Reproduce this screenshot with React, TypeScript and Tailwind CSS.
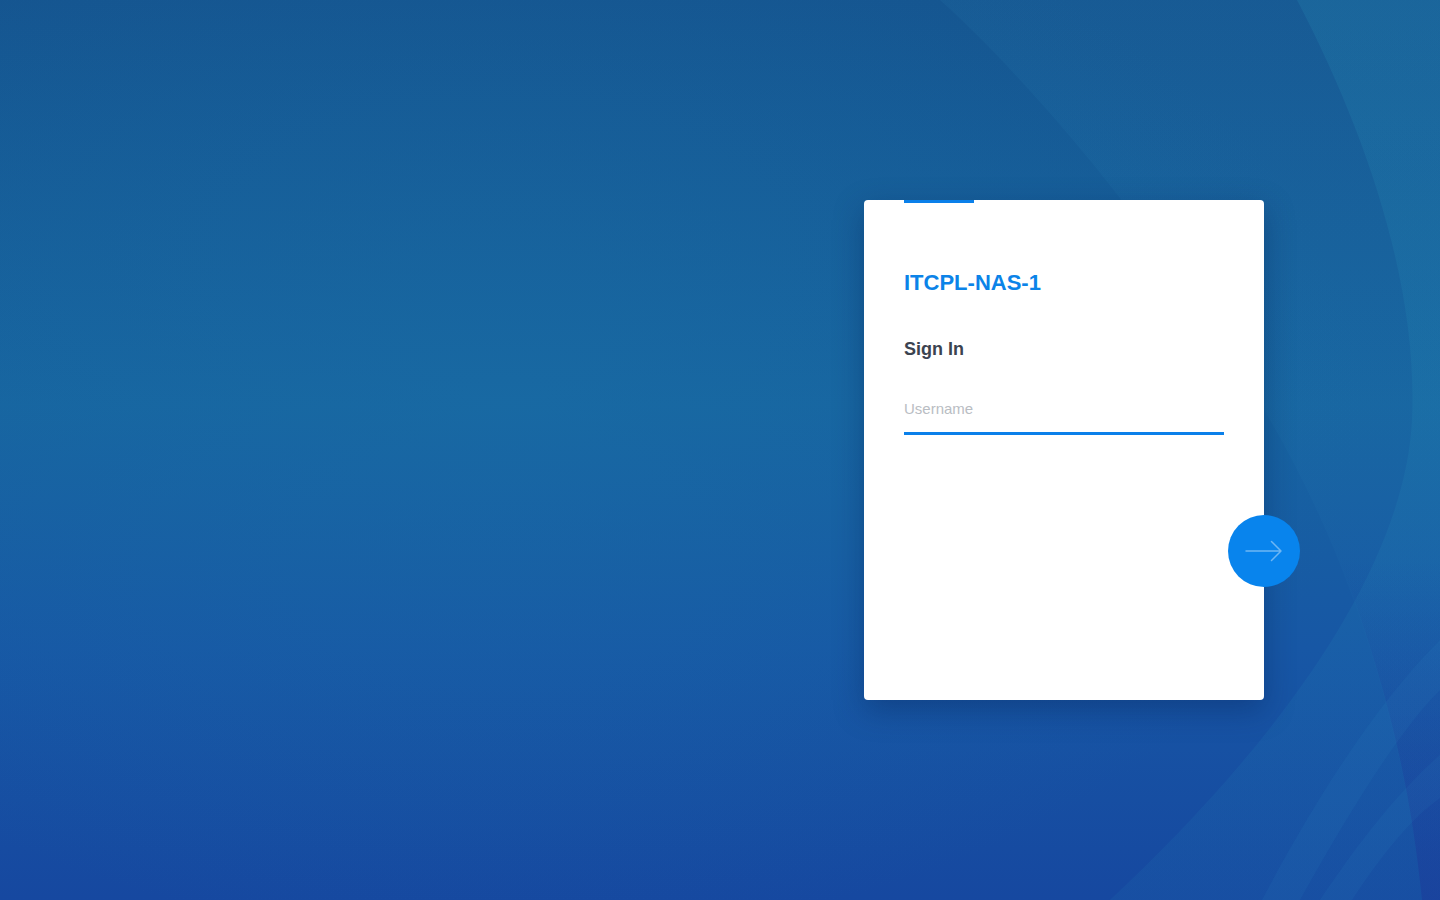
import { useState } from 'react'

function Backdrop() {
  return (
    <svg
      className="absolute inset-0 h-full w-full"
      viewBox="0 0 1440 900"
      preserveAspectRatio="none"
    >
      <defs>
        <radialGradient id="glow" cx="0.35" cy="0.45" r="0.6">
          <stop offset="0" stopColor="#1a72a8" stopOpacity="0.35" />
          <stop offset="1" stopColor="#1a72a8" stopOpacity="0" />
        </radialGradient>
        <linearGradient id="teal" x1="0" y1="0" x2="0" y2="1">
          <stop offset="0" stopColor="#2aa0c0" stopOpacity="0.16" />
          <stop offset="0.5" stopColor="#2aa0c0" stopOpacity="0.12" />
          <stop offset="1" stopColor="#2aa0c0" stopOpacity="0.08" />
        </linearGradient>
        <linearGradient id="sweep" x1="0" y1="0" x2="0" y2="1">
          <stop offset="0" stopColor="#3aa6d0" stopOpacity="0.07" />
          <stop offset="0.6" stopColor="#3aa6d0" stopOpacity="0.04" />
          <stop offset="1" stopColor="#3aa6d0" stopOpacity="0" />
        </linearGradient>
        <linearGradient
          id="corner"
          gradientUnits="userSpaceOnUse"
          x1="0"
          y1="560"
          x2="0"
          y2="900"
        >
          <stop offset="0" stopColor="#1b3a9a" stopOpacity="0" />
          <stop offset="1" stopColor="#1b3a9a" stopOpacity="0.55" />
        </linearGradient>
      </defs>
      <rect width="1440" height="900" fill="url(#glow)" />
      {/* long diagonal sweep */}
      <path
        d="M940,0 C1040,90 1180,260 1270,420 C1340,540 1400,700 1422,900 L1440,900 L1440,0 Z"
        fill="url(#sweep)"
      />
      {/* big arc on the right */}
      <path
        d="M1297,0 C1370,140 1418,290 1412,420 C1404,580 1260,760 1110,900 L1440,900 L1440,0 Z"
        fill="url(#teal)"
      />
      {/* darker corner past the sweep */}
      <path
        d="M1422,900 C1410,780 1385,680 1340,560 L1440,560 L1440,900 Z"
        fill="url(#corner)"
      />
      {/* soft bands bottom right */}
      <path
        d="M1440,640 C1380,700 1320,790 1262,900 L1300,900 C1350,810 1400,730 1440,690 Z"
        fill="#3aa6d0"
        fillOpacity="0.07"
      />
      <path
        d="M1440,755 C1400,790 1360,840 1320,900 L1352,900 C1385,850 1412,818 1440,798 Z"
        fill="#3aa6d0"
        fillOpacity="0.07"
      />
    </svg>
  )
}

function ArrowIcon() {
  return (
    <svg width="38" height="24" viewBox="0 0 38 24" fill="none">
      <path
        d="M1 12 H36 M26.5 2.5 L36 12 L26.5 21.5"
        stroke="#6db6f4"
        strokeWidth="1.5"
        strokeLinecap="round"
        strokeLinejoin="round"
      />
    </svg>
  )
}

export default function App() {
  const [username, setUsername] = useState('')

  return (
    <div className="relative h-screen w-full overflow-hidden bg-[linear-gradient(180deg,#155590_0%,#1764a0_45%,#1757a5_72%,#1648a0_100%)] font-['Liberation_Sans',Arial,sans-serif]">
      <Backdrop />

      <div className="relative flex h-full items-center justify-end pr-[176px]">
        {/* Login card */}
        <div className="relative h-[500px] w-[400px] rounded-[4px] bg-white px-10 shadow-[0_10px_30px_rgba(5,30,80,0.35)]">
          <div className="h-[3px] w-[70px] bg-[#0a80ea]" />

          <h1 className="mt-[67px] text-[22px] leading-[26px] font-bold text-[#0b83e8]">
            ITCPL-NAS-1
          </h1>

          <h2 className="mt-[42px] text-[18px] leading-[22px] font-bold text-[#3b4350]">
            Sign In
          </h2>

          <input
            value={username}
            onChange={(e) => setUsername(e.target.value)}
            placeholder="Username"
            className="mt-[24px] block h-[51px] w-full border-b-[3px] border-[#0a80ea] bg-transparent text-[15px] text-[#3b4350] outline-none placeholder:text-[#b9bdc3]"
          />

          <button className="absolute top-[315px] right-[-36px] flex h-[72px] w-[72px] items-center justify-center rounded-full bg-[#0884ed]">
            <ArrowIcon />
          </button>
        </div>
      </div>
    </div>
  )
}
